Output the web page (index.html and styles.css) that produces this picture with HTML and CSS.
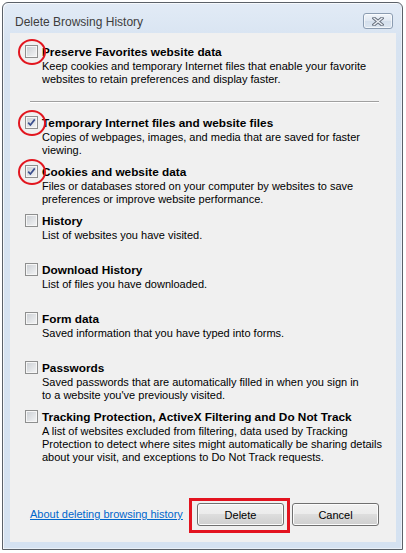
FILE: index.html
```html
<!DOCTYPE html>
<html lang="en">
<head>
  <meta charset="UTF-8">
  <meta name="viewport" content="width=device-width, initial-scale=1.0">
  <title>Delete Browsing History</title>
  <link rel="stylesheet" href="styles.css">
</head>
<body>
  <div class="window">
    <div class="titlebar">
      <span class="title">Delete Browsing History</span>
      <button class="close" type="button">
        <svg width="12" height="9" viewBox="0 0 12 9">
          <path d="M2 1.2 L10 7.8 M10 1.2 L2 7.8" stroke="#6b7481" stroke-width="3.4" stroke-linecap="square" fill="none"/>
          <path d="M2 1.2 L10 7.8 M10 1.2 L2 7.8" stroke="#eef2f7" stroke-width="1.3" stroke-linecap="square" fill="none"/>
        </svg>
      </button>
    </div>

    <div class="panel">
      <div class="item first">
        <span class="check"><span class="ring"></span></span>
        <span class="label">Preserve Favorites website data</span>
        <div class="desc">Keep cookies and temporary Internet files that enable your favorite<br>websites to retain preferences and display faster.</div>
      </div>

      <div class="rule"></div>

      <div class="item">
        <span class="check">
          <svg class="tick" width="11" height="11" viewBox="0 0 11 11"><path d="M2.2 5.6 L4.4 8 L8.8 2.4" stroke="#3b4f8e" stroke-width="1.7" fill="none"/></svg>
          <span class="ring"></span>
        </span>
        <span class="label">Temporary Internet files and website files</span>
        <div class="desc">Copies of webpages, images, and media that are saved for faster<br>viewing.</div>
      </div>

      <div class="item">
        <span class="check">
          <svg class="tick" width="11" height="11" viewBox="0 0 11 11"><path d="M2.2 5.6 L4.4 8 L8.8 2.4" stroke="#3b4f8e" stroke-width="1.7" fill="none"/></svg>
          <span class="ring"></span>
        </span>
        <span class="label">Cookies and website data</span>
        <div class="desc">Files or databases stored on your computer by websites to save<br>preferences or improve website performance.</div>
      </div>

      <div class="item">
        <span class="check"></span>
        <span class="label">History</span>
        <div class="desc">List of websites you have visited.</div>
      </div>

      <div class="item">
        <span class="check"></span>
        <span class="label">Download History</span>
        <div class="desc">List of files you have downloaded.</div>
      </div>

      <div class="item">
        <span class="check"></span>
        <span class="label">Form data</span>
        <div class="desc">Saved information that you have typed into forms.</div>
      </div>

      <div class="item">
        <span class="check"></span>
        <span class="label">Passwords</span>
        <div class="desc">Saved passwords that are automatically filled in when you sign in<br>to a website you've previously visited.</div>
      </div>

      <div class="item">
        <span class="check"></span>
        <span class="label">Tracking Protection, ActiveX Filtering and Do Not Track</span>
        <div class="desc">A list of websites excluded from filtering, data used by Tracking<br>Protection to detect where sites might automatically be sharing details<br>about your visit, and exceptions to Do Not Track requests.</div>
      </div>

      <div class="footer">
        <a class="link" href="#">About deleting browsing history</a>
        <span class="focus-wrap">
          <button class="btn" type="button">Delete</button>
          <span class="highlight"></span>
        </span>
        <button class="btn cancel" type="button">Cancel</button>
      </div>
    </div>
  </div>
</body>
</html>
```

FILE: styles.css
```css
body {
  margin: 0;
  background-color: #fff;
  font-family: "Liberation Sans", Arial, sans-serif;
  font-size: 11px;
  color: #000;
}

.window {
  box-sizing: border-box;
  width: 401px;
  height: 548px;
  margin: 2px 0 0 2px;
  padding: 0 6px 7px 7px;
  border: 1px solid #5b6169;
  border-radius: 6px 6px 0 0;
  background: linear-gradient(#e2ebf6, #d7e3f1 40px, #d5e2f1);
  box-shadow: inset 1px 1px 0 rgba(255, 255, 255, 0.7), inset -1px -1px 0 rgba(255, 255, 255, 0.5);
  display: flex;
  flex-direction: column;
}

.titlebar {
  height: 30px;
  flex-shrink: 0;
  display: flex;
  align-items: flex-start;
  justify-content: space-between;
  padding: 0 3px 0 5px;
}

.title {
  margin-top: 12px;
  font-size: 12px;
  line-height: 14px;
  color: #3d3d3d;
}

.close {
  box-sizing: border-box;
  margin-top: 10px;
  width: 30px;
  height: 16px;
  padding: 0;
  border: 1px solid #8b9cb1;
  border-radius: 3px;
  background: linear-gradient(#f1f5fa, #e0e8f2 50%, #d4dfec 51%, #dce6f1);
  box-shadow: inset 0 0 0 1px rgba(255, 255, 255, 0.6);
  display: flex;
  align-items: center;
  justify-content: center;
}

.panel {
  flex: 1;
  background-color: #f0f0f0;
  display: flex;
  flex-direction: column;
  padding: 12px 0 0 15px;
}

.item {
  display: grid;
  grid-template-columns: 13px auto;
  grid-template-rows: 14px auto;
  column-gap: 4px;
  height: 49px;
  flex-shrink: 0;
}

.item.first {
  height: 56px;
}

.check {
  position: relative;
  box-sizing: border-box;
  width: 13px;
  height: 13px;
  border: 1px solid #8e8f8f;
  background: linear-gradient(135deg, #c9cdd2, #f5f6f7);
  box-shadow: inset 0 0 0 1px #f6f6f6;
}

.tick {
  display: block;
}

.ring {
  position: absolute;
  left: -8px;
  top: -7px;
  width: 28px;
  height: 26px;
  box-sizing: border-box;
  border: 2.5px solid #e2161f;
  border-radius: 50%;
}

.label {
  font-weight: bold;
  font-size: 11.8px;
  line-height: 14px;
  white-space: nowrap;
}

.desc {
  grid-column: 2;
  margin-top: 1px;
  line-height: 13px;
  white-space: nowrap;
}

.rule {
  width: 349px;
  height: 0;
  margin: 0 0 13px 5px;
  border-top: 1px solid #a0a0a0;
  border-bottom: 1px solid #fff;
  flex-shrink: 0;
}

.footer {
  margin-top: auto;
  display: flex;
  align-items: center;
  padding: 0 17px 16px 5px;
}

.link {
  flex: 1;
  color: #0066cc;
  text-decoration: underline;
  line-height: 13px;
}

.btn {
  box-sizing: border-box;
  width: 87px;
  height: 23px;
  padding: 0;
  border: 1px solid #707070;
  border-radius: 3px;
  background: linear-gradient(#f2f2f2, #ebebeb 50%, #dddddd 50%, #cfcfcf);
  box-shadow: inset 0 0 0 1px #fcfcfc;
  font-family: "Liberation Sans", Arial, sans-serif;
  font-size: 11px;
  color: #000;
}

.focus-wrap {
  position: relative;
  display: flex;
}

.highlight {
  position: absolute;
  left: -8px;
  top: -5px;
  width: 101px;
  height: 35px;
  box-sizing: border-box;
  border: 3px solid #e3131f;
}

.cancel {
  margin-left: 8px;
}
```
